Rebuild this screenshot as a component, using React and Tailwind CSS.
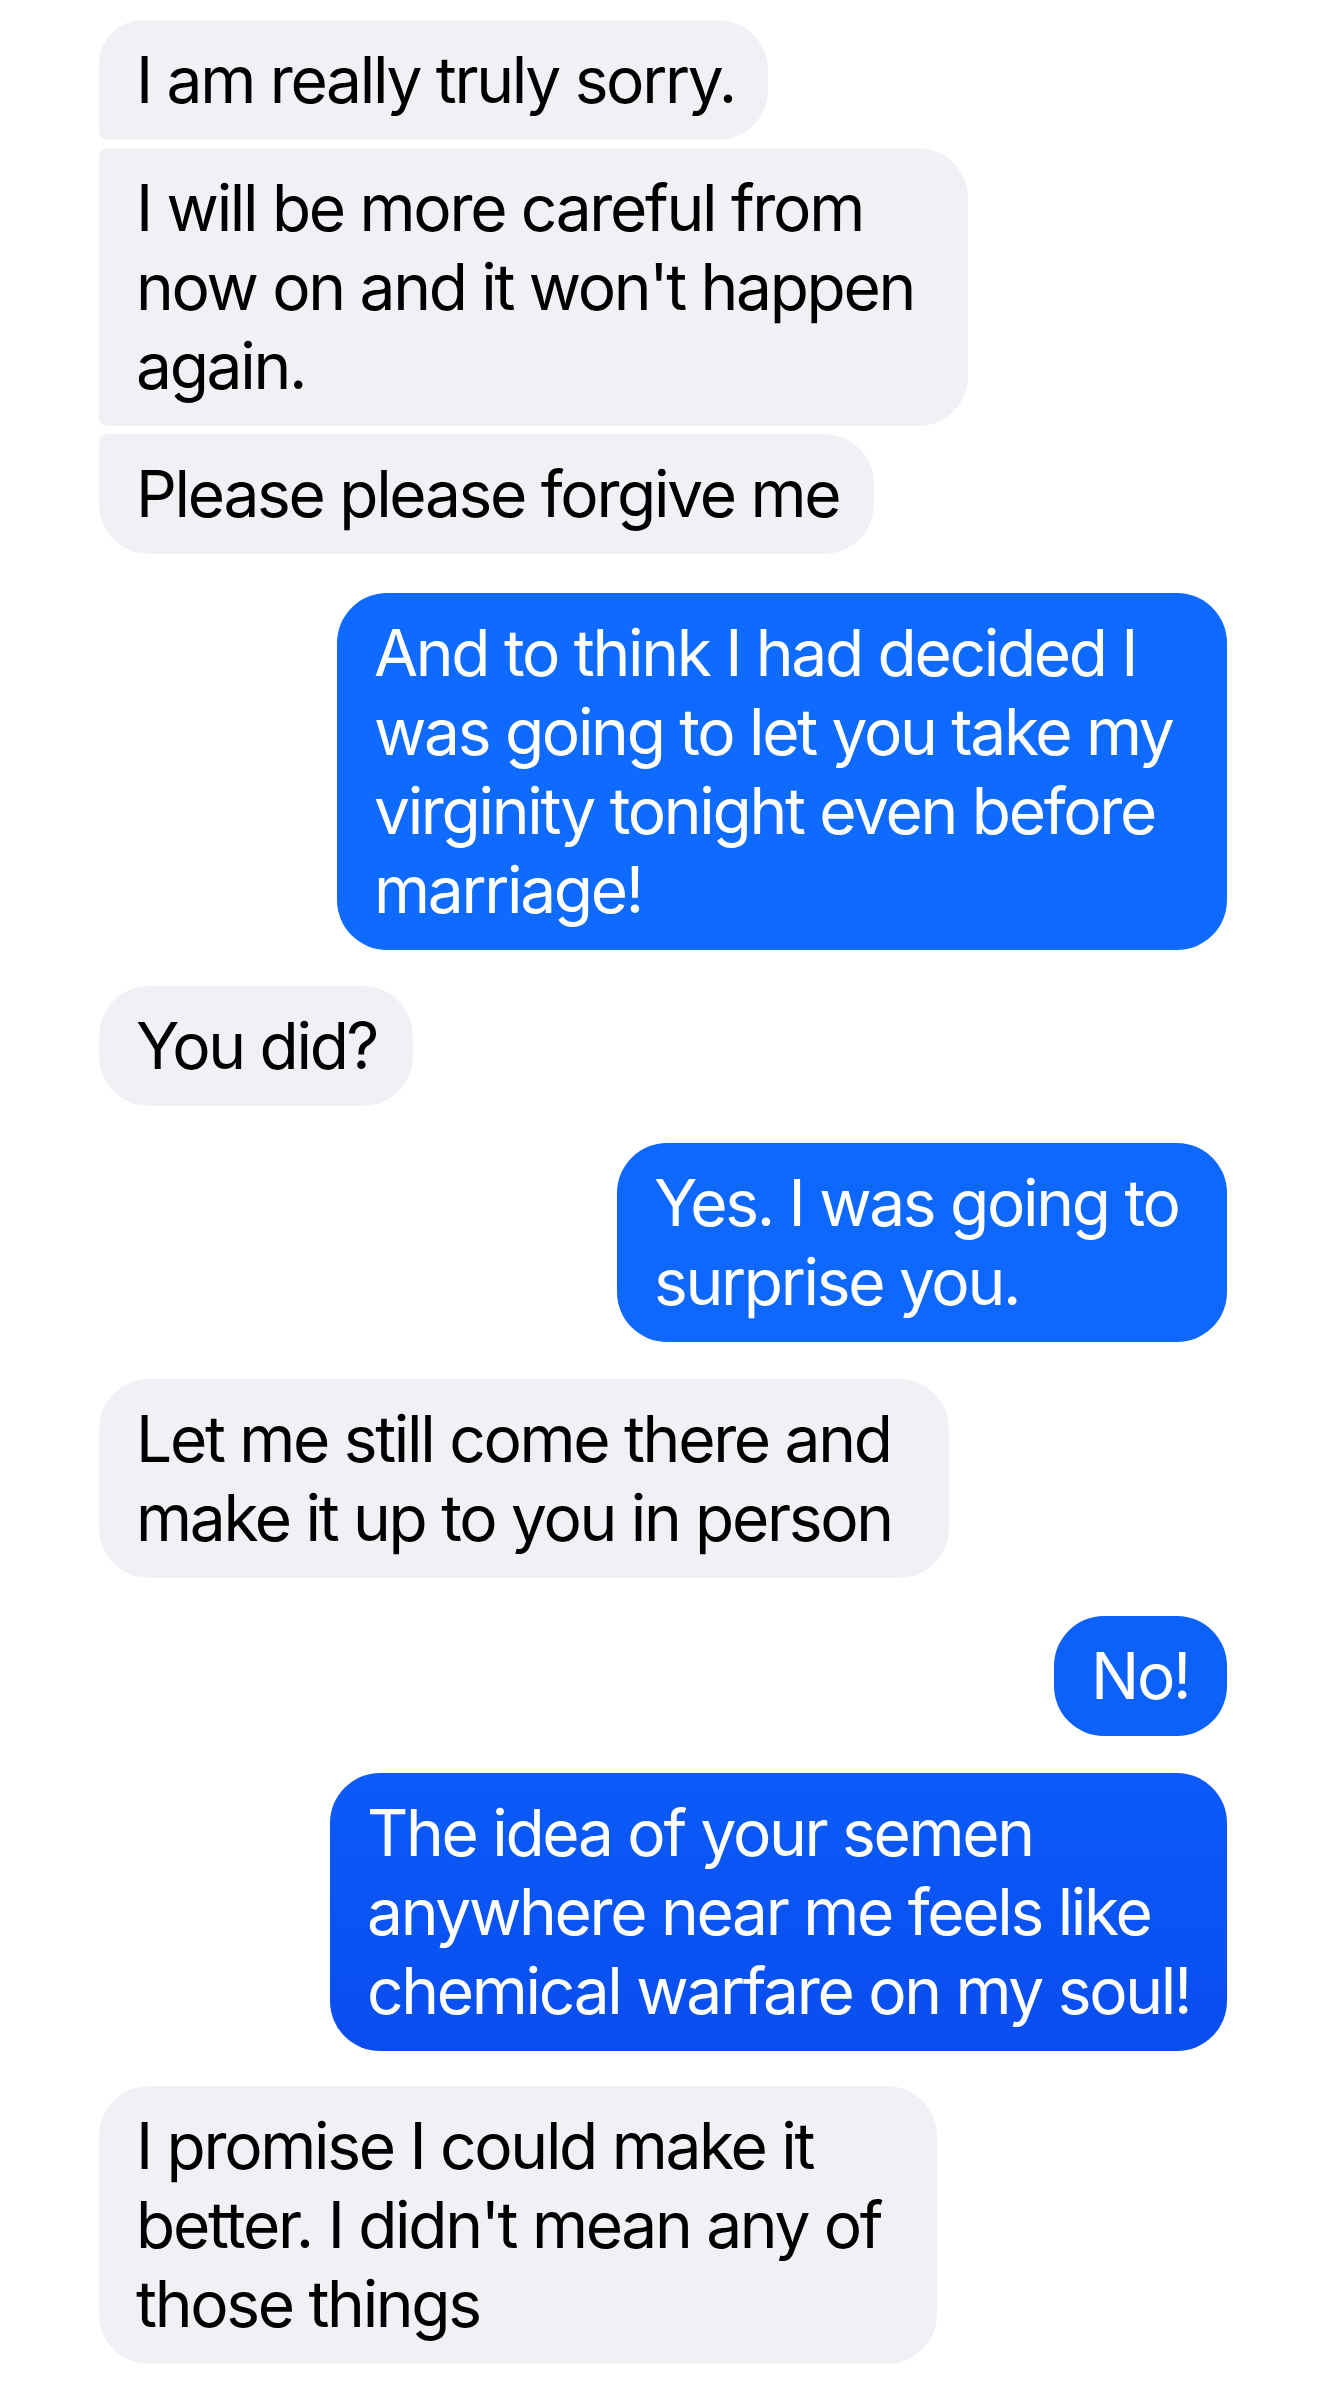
import React from "react";

const GRAY = "bg-[#f0f1f5] text-black";

function Bubble({ lines, className, width }) {
  return (
    <div
      className={`pl-[37px] pr-[38px] pt-[20px] pb-[21px] text-[64px] leading-[79px] whitespace-nowrap tracking-[-2.3px] ${className}`}
      style={{ width }}
    >
      {lines.map((l, i) => (
        <div key={i}>{l}</div>
      ))}
    </div>
  );
}

export default function App() {
  return (
    <div
      className="w-[1340px] h-[2400px] bg-white flex flex-col pt-[20px] pl-[99px] pr-[113px] overflow-hidden"
      style={{ fontFamily: "Inter, 'Noto Sans', sans-serif" }}
    >
      <div className="flex flex-col items-start gap-[8px]">
        <Bubble
          width={669}
          className={`${GRAY} rounded-tl-[44px] rounded-tr-[50px] rounded-br-[50px] rounded-bl-[8px]`}
          lines={["I am really truly sorry."]}
        />
        <Bubble
          width={869}
          className={`${GRAY} rounded-tl-[8px] rounded-tr-[50px] rounded-br-[50px] rounded-bl-[8px]`}
          lines={["I will be more careful from", "now on and it won't happen", "again."]}
        />
        <Bubble
          width={775}
          className={`${GRAY} rounded-tl-[8px] rounded-tr-[50px] rounded-br-[50px] rounded-bl-[50px]`}
          lines={["Please please forgive me"]}
        />
      </div>

      <div className="flex flex-col items-end mt-[39px]">
        <Bubble
          width={890}
          className="bg-[#0f6bff] text-white rounded-[50px]"
          lines={["And to think I had decided I", "was going to let you take my", "virginity tonight even before", "marriage!"]}
        />
      </div>

      <div className="flex flex-col items-start mt-[36px]">
        <Bubble width={314} className={`${GRAY} rounded-[50px]`} lines={["You did?"]} />
      </div>

      <div className="flex flex-col items-end mt-[37px]">
        <Bubble
          width={610}
          className="bg-[#0e68fe] text-white rounded-[50px]"
          lines={["Yes. I was going to", "surprise you."]}
        />
      </div>

      <div className="flex flex-col items-start mt-[37px]">
        <Bubble
          width={850}
          className={`${GRAY} rounded-[50px]`}
          lines={["Let me still come there and", "make it up to you in person"]}
        />
      </div>

      <div className="flex flex-col items-end mt-[38px]">
        <Bubble width={173} className="bg-[#0c61fb] text-white rounded-[50px]" lines={["No!"]} />
      </div>

      <div className="flex flex-col items-end mt-[37px]">
        <Bubble
          width={897}
          className="bg-gradient-to-b from-[#0b5bf8] to-[#0a4def] text-white rounded-[50px]"
          lines={["The idea of your semen", "anywhere near me feels like", "chemical warfare on my soul!"]}
        />
      </div>

      <div className="flex flex-col items-start mt-[35px]">
        <Bubble
          width={838}
          className={`${GRAY} rounded-[50px]`}
          lines={["I promise I could make it", "better. I didn't mean any of", "those things"]}
        />
      </div>
    </div>
  );
}
